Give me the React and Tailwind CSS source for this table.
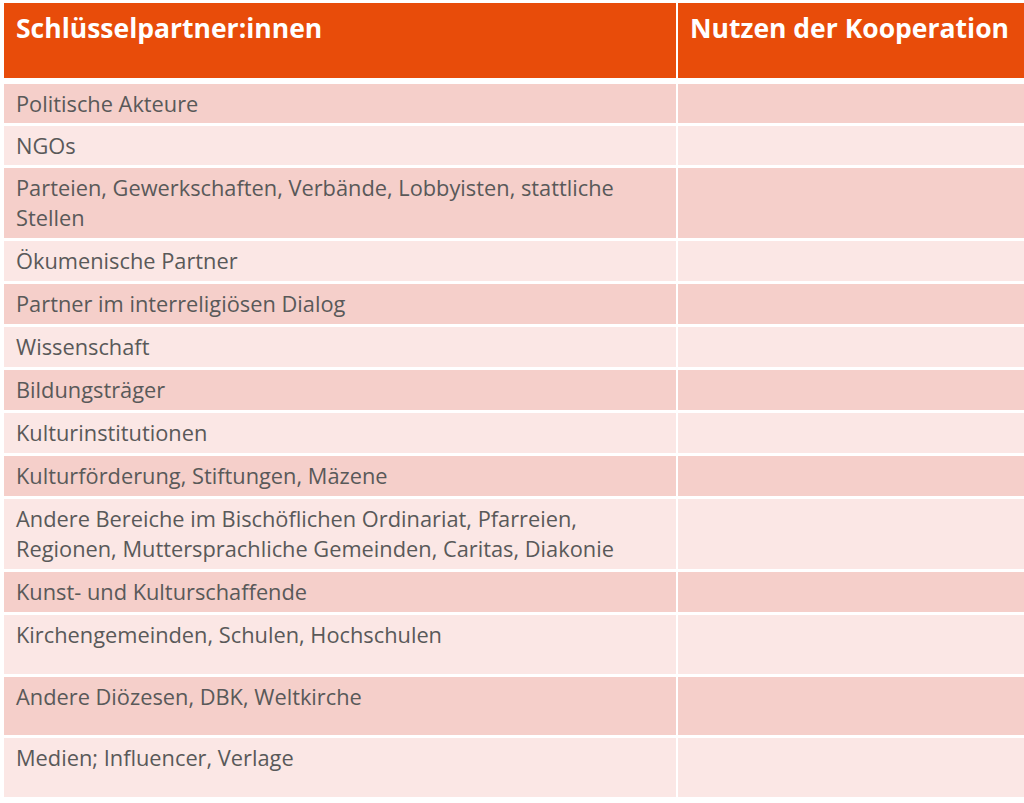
import React from 'react';

const rows = [
  { label: 'Politische Akteure', h: 'h-[39px]' },
  { label: 'NGOs', h: 'h-[39px]' },
  { label: ['Parteien, Gewerkschaften, Verbände, Lobbyisten, stattliche', 'Stellen'], h: 'h-[70px]' },
  { label: 'Ökumenische Partner', h: 'h-[40px]' },
  { label: 'Partner im interreligiösen Dialog', h: 'h-[40px]' },
  { label: 'Wissenschaft', h: 'h-[40px]' },
  { label: 'Bildungsträger', h: 'h-[40px]' },
  { label: 'Kulturinstitutionen', h: 'h-[40px]' },
  { label: 'Kulturförderung, Stiftungen, Mäzene', h: 'h-[40px]' },
  {
    label: [
      'Andere Bereiche im Bischöflichen Ordinariat, Pfarreien,',
      'Regionen, Muttersprachliche Gemeinden, Caritas, Diakonie',
    ],
    h: 'h-[70px]',
  },
  { label: 'Kunst- und Kulturschaffende', h: 'h-[40px]' },
  { label: 'Kirchengemeinden, Schulen, Hochschulen', h: 'h-[59px]' },
  { label: 'Andere Diözesen, DBK, Weltkirche', h: 'h-[58px]' },
  { label: 'Medien; Influencer, Verlage', h: 'h-[59px]' },
];

function Row({ row, index }) {
  const bg = index % 2 === 0 ? 'bg-[#f5cfca]' : 'bg-[#fbe7e5]';
  const lines = Array.isArray(row.label) ? row.label : [row.label];
  return (
    <div className={`flex gap-[2px] ${row.h}`}>
      <div className={`w-[672px] shrink-0 px-3 pt-[5px] text-[21.8px] leading-[30px] text-[#595959] ${bg}`}>
        {lines.map((l, i) => (
          <div key={i} className="whitespace-nowrap">{l}</div>
        ))}
      </div>
      <div className={`flex-1 ${bg}`} />
    </div>
  );
}

export default function App() {
  return (
    <div className="min-h-[803px] w-[1024px] overflow-hidden bg-white pl-[4px] pt-[3px] font-['Open_Sans',sans-serif]">
      <div className="flex h-[75px] gap-[2px]">
        <div className="w-[672px] shrink-0 bg-[#e84c0a] px-3 pt-[6px] text-[26.5px] font-bold text-white">
          Schlüsselpartner:innen
        </div>
        <div className="flex-1 bg-[#e84c0a] px-3 pt-[6px] text-[26.5px] font-bold text-white whitespace-nowrap">
          Nutzen der Kooperation
        </div>
      </div>
      <div className="mt-[6px] flex flex-col gap-[3px]">
        {rows.map((r, i) => (
          <Row key={i} row={r} index={i} />
        ))}
      </div>
    </div>
  );
}
